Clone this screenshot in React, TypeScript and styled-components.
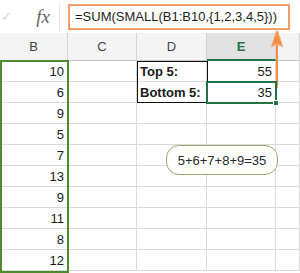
import React from "react";
import styled, { createGlobalStyle } from "styled-components";

const GlobalStyle = createGlobalStyle`
  html, body {
    margin: 0;
    padding: 0;
    background: #ffffff;
    overflow: hidden;
  }
  body {
    font-family: "Liberation Sans", Arial, sans-serif;
  }
`;

const Page = styled.div`
  position: relative;
  width: 300px;
  height: 273px;
  overflow: hidden;
  background: #ffffff;
`;

const FormulaBar = styled.div`
  display: flex;
  align-items: center;
  height: 33px;
  background: #ffffff;
`;

const CheckMark = styled.span`
  width: 22px;
  margin-left: 1px;
  color: #dadada;
  font-size: 13px;
  font-family: "DejaVu Sans", sans-serif;
`;

const Fx = styled.div`
  width: 32px;
  height: 26px;
  display: flex;
  align-items: center;
  justify-content: center;
  font-family: "Liberation Serif", serif;
  font-style: italic;
  font-size: 19px;
  color: #666666;
  margin-left: 4px;
  border-right: 1px solid #e6e6e6;
`;

const FormulaBox = styled.div`
  margin-left: 8px;
  width: 213px;
  height: 22px;
  border: 2px solid #f39c6b;
  display: flex;
  align-items: center;
  padding-left: 5px;
  font-size: 13px;
  color: #1e1e1e;
  white-space: nowrap;
  overflow: hidden;
`;

const Sheet = styled.div`
  display: grid;
  grid-template-columns: 68px 69px 70px 69px 1fr;
  grid-template-rows: 28px repeat(10, 21px);
`;

const Header = styled.div<{ $active?: boolean }>`
  display: flex;
  align-items: center;
  justify-content: center;
  background: ${(p) => (p.$active ? "#e1e1e1" : "#f4f4f4")};
  color: ${(p) => (p.$active ? "#217346" : "#444")};
  font-weight: ${(p) => (p.$active ? 700 : 400)};
  font-size: 13px;
  border-right: 1px solid #d4d4d4;
  border-bottom: ${(p) => (p.$active ? "2px solid #217346" : "1px solid #c6c6c6")};
  box-sizing: border-box;
`;

const Cell = styled.div<{ $bold?: boolean; $align?: "left" | "right" }>`
  display: flex;
  align-items: center;
  justify-content: ${(p) => (p.$align === "left" ? "flex-start" : "flex-end")};
  padding: 0 3px;
  font-size: 13px;
  font-weight: ${(p) => (p.$bold ? 700 : 400)};
  color: #1a1a1a;
  border-right: 1px solid #d9d9d9;
  border-bottom: 1px solid #d9d9d9;
  box-sizing: border-box;
  white-space: nowrap;
  overflow: hidden;
`;

const RangeBox = styled.div`
  position: absolute;
  left: 0;
  top: 60px;
  width: 69px;
  height: 213px;
  border: 2px solid #4e8a2e;
  box-sizing: border-box;
  pointer-events: none;
`;

const LabelBox = styled.div`
  position: absolute;
  left: 137px;
  top: 61px;
  width: 71px;
  height: 42px;
  border: 1px solid #111;
  box-sizing: border-box;
`;

const Selection = styled.div`
  position: absolute;
  left: 206px;
  top: 81px;
  width: 71px;
  height: 23px;
  border: 2px solid #217346;
  box-sizing: border-box;
`;

const FillHandle = styled.div`
  position: absolute;
  left: 273px;
  top: 100px;
  width: 6px;
  height: 6px;
  background: #217346;
  border: 1px solid #fff;
  box-sizing: border-box;
`;

const Callout = styled.div`
  position: absolute;
  left: 166px;
  top: 145px;
  width: 112px;
  height: 30px;
  border: 1.5px solid #a4a46a;
  border-radius: 13px;
  background: #ffffff;
  box-sizing: border-box;
  display: flex;
  align-items: center;
  justify-content: center;
  font-size: 13px;
  color: #2a2a2a;
`;

const Arrow = styled.svg`
  position: absolute;
  left: 268px;
  top: 28px;
`;

const values = [10, 6, 9, 5, 7, 13, 9, 11, 8, 12];

export default function App() {
  return (
    <Page>
      <GlobalStyle />
      <FormulaBar>
        <CheckMark>✓</CheckMark>
        <Fx>fx</Fx>
        <FormulaBox>=SUM(SMALL(B1:B10,{"{"}1,2,3,4,5{"}"}))</FormulaBox>
      </FormulaBar>
      <Sheet>
        <Header>B</Header>
        <Header>C</Header>
        <Header>D</Header>
        <Header $active>E</Header>
        <Header />
        {values.map((v, i) => (
          <React.Fragment key={i}>
            <Cell>{v}</Cell>
            <Cell />
            <Cell $bold $align="left">
              {i === 0 ? "Top 5:" : i === 1 ? "Bottom 5:" : ""}
            </Cell>
            <Cell>{i === 0 ? "55" : i === 1 ? "35" : ""}</Cell>
            <Cell />
          </React.Fragment>
        ))}
      </Sheet>
      <RangeBox />
      <LabelBox />
      <Arrow width="18" height="64" viewBox="0 0 18 64">
        <line x1="9" y1="14" x2="9" y2="60" stroke="#f08c45" strokeWidth="2" />
        <path d="M9 1 L15 19 L9 16 L3 19 Z" fill="#f5904a" stroke="#f7b98b" strokeWidth="0.8" />
      </Arrow>
      <Selection />
      <FillHandle />
      <Callout>5+6+7+8+9=35</Callout>
    </Page>
  );
}
